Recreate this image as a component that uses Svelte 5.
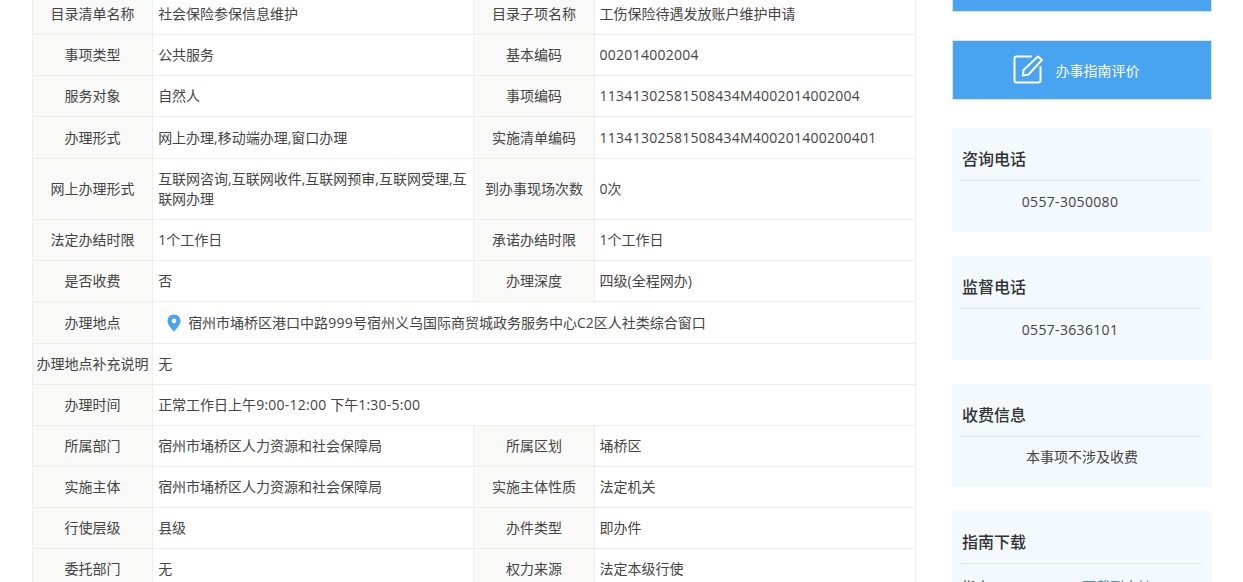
<script>
	const topRows = [
		['目录清单名称', '社会保险参保信息维护', '目录子项名称', '工伤保险待遇发放账户维护申请'],
		['事项类型', '公共服务', '基本编码', '002014002004'],
		['服务对象', '自然人', '事项编码', '11341302581508434M4002014002004'],
		['办理形式', '网上办理,移动端办理,窗口办理', '实施清单编码', '11341302581508434M400201400200401'],
		['网上办理形式', '互联网咨询,互联网收件,互联网预审,互联网受理,互联网办理', '到办事现场次数', '0次'],
		['法定办结时限', '1个工作日', '承诺办结时限', '1个工作日'],
		['是否收费', '否', '办理深度', '四级(全程网办)']
	];

	const bottomRows = [
		['所属部门', '宿州市埇桥区人力资源和社会保障局', '所属区划', '埇桥区'],
		['实施主体', '宿州市埇桥区人力资源和社会保障局', '实施主体性质', '法定机关'],
		['行使层级', '县级', '办件类型', '即办件'],
		['委托部门', '无', '权力来源', '法定本级行使']
	];

	const isCode = (v) => /^[\dA-Z]+$/.test(v);
</script>

{#snippet row(cells, tall = false)}
	<tr class:tall>
		<th>{cells[0]}</th>
		<td>{cells[1]}</td>
		<th>{cells[2]}</th>
		<td class:code={isCode(cells[3])}>{cells[3]}</td>
	</tr>
{/snippet}

<div class="page">
	<main>
		<table>
			<colgroup>
				<col class="label" />
				<col class="value" />
				<col class="label" />
				<col class="value" />
			</colgroup>
			<tbody>
				{#each topRows as cells, i}
					{@render row(cells, i === 3)}
				{/each}
				<tr class="tall">
					<th>办理地点</th>
					<td colspan="3">
						<div class="place">
							<svg width="14" height="18" viewBox="0 0 14 18">
								<path fill="#4aa3ee" fill-rule="evenodd" d="M7 0.5C3.3 0.5 0.5 3.3 0.5 6.9C0.5 10.8 4.6 14.6 7 17.5C9.4 14.6 13.5 10.8 13.5 6.9C13.5 3.3 10.7 0.5 7 0.5ZM7 4.6A2.3 2.3 0 1 1 7 9.200A2.300 2.300 0 1 1 7 4.600Z" />
							</svg>
							<span>宿州市埇桥区港口中路<span class="code">999</span>号宿州义乌国际商贸城政务服务中心C2区人社类综合窗口</span>
						</div>
					</td>
				</tr>
				<tr>
					<th class="tight">办理地点补充说明</th>
					<td colspan="3">无</td>
				</tr>
				<tr>
					<th>办理时间</th>
					<td colspan="3">正常工作日上午<span class="code">9:00-12:00</span> 下午<span class="code">1:30-5:00</span></td>
				</tr>
				{#each bottomRows as cells}
					{@render row(cells)}
				{/each}
			</tbody>
		</table>
	</main>

	<aside>
		<div class="btn stub"></div>
		<div class="btn">
			<svg width="30" height="30" viewBox="0 0 30 30" fill="none" stroke="#fff" stroke-width="2" stroke-linejoin="round" stroke-linecap="round">
				<path d="M18 1.500H3.500Q1.500 1.500 1.500 3.500V25.500Q1.500 27.500 3.500 27.500H25.500Q27.500 27.500 27.500 25.500V12" />
				<path d="M25 1.500L29 5L15.500 19.500L10 20.500L10.500 15Z" />
			</svg>
			<span>办事指南评价</span>
		</div>

		<section class="panel">
			<h3>咨询电话</h3>
			<p class="phone">0557-3050080</p>
		</section>
		<section class="panel">
			<h3>监督电话</h3>
			<p class="phone">0557-3636101</p>
		</section>
		<section class="panel fee">
			<h3>收费信息</h3>
			<p>本事项不涉及收费</p>
		</section>
		<section class="panel">
			<h3>指南下载</h3>
			<div class="download">
				<span>指南PDF</span>
				<a href="#top">下载到本地</a>
			</div>
		</section>
	</aside>
</div>

<style>
	:global(body) {
		margin: 0;
		background: #fff;
	}

	.page {
		display: flex;
		align-items: flex-start;
		gap: 36px;
		height: 582px;
		overflow: hidden;
		padding-left: 32px;
		font-family: "Open Sans", "Noto Sans CJK SC", sans-serif;
		font-size: 14px;
		color: #444;
	}

	/* the page is scrolled a little, the first row runs off the top */
	table {
		width: 884px;
		margin-top: -7px;
		table-layout: fixed;
		border-collapse: collapse;
		border-left: 1px solid #eee;
		border-right: 1px solid #eee;
	}

	col.label {
		width: 120px;
	}

	col.value {
		width: 321px;
	}

	tr {
		height: 41px;
	}

	tr.tall {
		height: 42px;
	}

	th,
	td {
		padding: 10px 5px;
		border: 1px solid #eee;
		font-weight: 400;
		line-height: 20px;
		word-break: break-all;
	}

	th {
		background: #f9f9f7;
		text-align: center;
	}

	th.tight {
		padding: 10px 0;
	}

	.code {
		letter-spacing: 0.25px;
	}

	.place {
		display: flex;
		align-items: center;
		gap: 7px;
		padding-left: 9px;
	}

	aside {
		display: flex;
		flex-direction: column;
		gap: 24px;
		flex: 0 0 260px;
	}

	.btn {
		display: flex;
		align-items: center;
		justify-content: center;
		gap: 13px;
		height: 60px;
		margin-bottom: 4px;
		padding-right: 12px;
		box-sizing: border-box;
		background: #48a3f0;
		border: 1px solid #d6e4f2;
		color: #fff;
	}

	.btn.stub {
		height: 12px;
		border-top: none;
	}

	.panel {
		padding: 18px 10px 17px;
		background: #f2f9ff;
	}

	h3 {
		margin: 0;
		padding-bottom: 8px;
		border-bottom: 1px dotted #ddd;
		font-size: 16px;
		font-weight: 500;
		line-height: 26px;
		color: #333;
	}

	.panel p {
		margin: 8px 0 0;
		line-height: 26px;
		text-align: center;
	}

	.panel.fee p {
		margin-top: 7px;
	}

	.panel .phone {
		padding-right: 24px;
		letter-spacing: 0.33px;
	}

	.download {
		display: flex;
		padding-top: 10px;
		line-height: 26px;
	}

	.download span {
		width: 120px;
	}

	a {
		color: #3b8fd9;
		text-decoration: none;
	}
</style>
